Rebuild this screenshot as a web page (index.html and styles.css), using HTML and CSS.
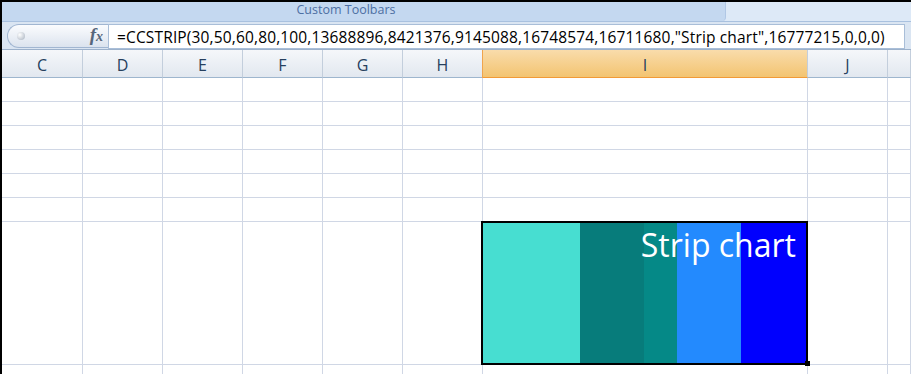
FILE: index.html
```html
<!DOCTYPE html>
<html lang="en">
<head>
    <meta charset="UTF-8">
    <title>Strip chart</title>
    <link rel="stylesheet" href="styles.css">
</head>
<body>
    <div class="excel">
        <div class="toolbars">
            <div class="toolbar-tab">Custom Toolbars</div>
        </div>

        <div class="formula-bar">
            <div class="name-box">
                <span class="grip"></span>
                <span class="fx">f<span class="fx-x">x</span></span>
            </div>
            <div class="formula">=CCSTRIP(30,50,60,80,100,13688896,8421376,9145088,16748574,16711680,"Strip chart",16777215,0,0,0)</div>
        </div>

        <div class="sheet">
            <div class="row header">
                <div class="col">C</div>
                <div class="col">D</div>
                <div class="col">E</div>
                <div class="col">F</div>
                <div class="col">G</div>
                <div class="col">H</div>
                <div class="col selected">I</div>
                <div class="col">J</div>
                <div class="col"></div>
            </div>

            <div class="cells">
                <div class="row"><div class="cell"></div><div class="cell"></div><div class="cell"></div><div class="cell"></div><div class="cell"></div><div class="cell"></div><div class="cell"></div><div class="cell"></div><div class="cell"></div></div>
                <div class="row"><div class="cell"></div><div class="cell"></div><div class="cell"></div><div class="cell"></div><div class="cell"></div><div class="cell"></div><div class="cell"></div><div class="cell"></div><div class="cell"></div></div>
                <div class="row"><div class="cell"></div><div class="cell"></div><div class="cell"></div><div class="cell"></div><div class="cell"></div><div class="cell"></div><div class="cell"></div><div class="cell"></div><div class="cell"></div></div>
                <div class="row"><div class="cell"></div><div class="cell"></div><div class="cell"></div><div class="cell"></div><div class="cell"></div><div class="cell"></div><div class="cell"></div><div class="cell"></div><div class="cell"></div></div>
                <div class="row"><div class="cell"></div><div class="cell"></div><div class="cell"></div><div class="cell"></div><div class="cell"></div><div class="cell"></div><div class="cell"></div><div class="cell"></div><div class="cell"></div></div>
                <div class="row"><div class="cell"></div><div class="cell"></div><div class="cell"></div><div class="cell"></div><div class="cell"></div><div class="cell"></div><div class="cell"></div><div class="cell"></div><div class="cell"></div></div>
                <div class="row tall"><div class="cell"></div><div class="cell"></div><div class="cell"></div><div class="cell"></div><div class="cell"></div><div class="cell"></div><div class="cell"></div><div class="cell"></div><div class="cell"></div></div>
                <div class="row"><div class="cell"></div><div class="cell"></div><div class="cell"></div><div class="cell"></div><div class="cell"></div><div class="cell"></div><div class="cell"></div><div class="cell"></div><div class="cell"></div></div>

                <!-- Chart drawn by the CCSTRIP formula, floats over the cells -->
                <div class="strip-chart">
                    <div class="strip s1" style="width: 30%;"></div>
                    <div class="strip s2" style="width: 20%;"></div>
                    <div class="strip s3" style="width: 10%;"></div>
                    <div class="strip s4" style="width: 20%;"></div>
                    <div class="strip s5" style="width: 20%;"></div>
                    <div class="chart-title">Strip chart</div>
                    <div class="handle"></div>
                </div>
            </div>
        </div>
    </div>
</body>
</html>
```

FILE: styles.css
```css
/* Reset */
* {
    margin: 0;
    padding: 0;
    box-sizing: border-box;
}

body {
    width: 911px;
    height: 374px;
    overflow: hidden;
    background: #fff;
    font-family: "Open Sans", Arial, sans-serif;
}

.excel {
    height: 374px;
    overflow: hidden;
    border-top: 2px solid #000;
    border-left: 2px solid #000;
}

/* Toolbar strip */
.toolbars {
    display: flex;
    height: 20px;
    background: #dde9f7;
    border-bottom: 1px solid #a9c1df;
}

.toolbar-tab {
    width: 724px;
    height: 19px;
    padding-right: 35px;
    background: #c4d8f0;
    border-right: 1px solid #b0c7e5;
    border-bottom-right-radius: 4px;
    color: #4d6fa3;
    font-size: 12.5px;
    line-height: 16px;
    text-align: center;
}

/* Formula bar */
.formula-bar {
    display: flex;
    align-items: flex-start;
    height: 28px;
    padding: 2px 6px 0 5px;
    background: #dae5f2;
    border-bottom: 1px solid #9cb1cb;
}

.name-box {
    display: flex;
    align-items: center;
    justify-content: space-between;
    width: 101px;
    height: 24px;
    padding: 0 5px 0 9px;
    background: linear-gradient(#fbfcfe, #dbe3ee);
    border: 1px solid #a1b6d1;
    border-right: none;
    border-radius: 12px 0 0 12px;
}

.grip {
    width: 8px;
    height: 8px;
    border-radius: 50%;
    background: radial-gradient(circle at 35% 35%, #fff, #a5b0be);
}

.fx {
    font-family: "Liberation Serif", serif;
    font-style: italic;
    font-weight: bold;
    font-size: 19px;
    line-height: 18px;
    color: #56667b;
}

.fx-x {
    font-size: 14px;
}

.formula {
    flex: 1;
    height: 25px;
    padding: 1px 0 0 8px;
    background: #fff;
    border: 1px solid #a9bed8;
    font-size: 15.5px;
    letter-spacing: 0.15px;
    line-height: 22px;
    color: #000;
    white-space: nowrap;
    overflow: hidden;
}

/* Sheet grid */
.row {
    display: grid;
    grid-template-columns: 81px repeat(5, 80px) 325px 80px 1fr;
    height: 24px;
}

.header {
    height: 28px;
    background: linear-gradient(#f5f7fa, #e1e7ef);
}

.col {
    padding-top: 3px;
    border-right: 1px solid #c3cedc;
    border-bottom: 1px solid #9eb6ce;
    color: #263f5e;
    font-size: 16px;
    line-height: 24px;
    text-align: center;
}

.col.selected {
    background: linear-gradient(#f9dcab, #f3c471);
    border-bottom-color: #f29a36;
    box-shadow: -1px 0 0 #f0a44d;
}

.cells {
    position: relative;
}

.cell {
    border-right: 1px solid #d0d7e5;
    border-bottom: 1px solid #d0d7e5;
}

.row.tall {
    height: 143px;
}

/* Strip chart */
.strip-chart {
    position: absolute;
    left: 479px;
    top: 143px;
    display: flex;
    width: 327px;
    height: 144px;
    border: 2px solid #000;
}

.strip {
    height: 100%;
}

.s1 { background: #47ded1; }
.s2 { background: #077c7b; }
.s3 { background: #058987; }
.s4 { background: #238afe; }
.s5 { background: #0000fe; }

.chart-title {
    position: absolute;
    top: 3px;
    right: 10px;
    color: #fff;
    font-size: 32px;
    line-height: 38px;
    white-space: nowrap;
}

.handle {
    position: absolute;
    right: -4px;
    bottom: -3px;
    width: 5px;
    height: 5px;
    background: #000;
}
```
